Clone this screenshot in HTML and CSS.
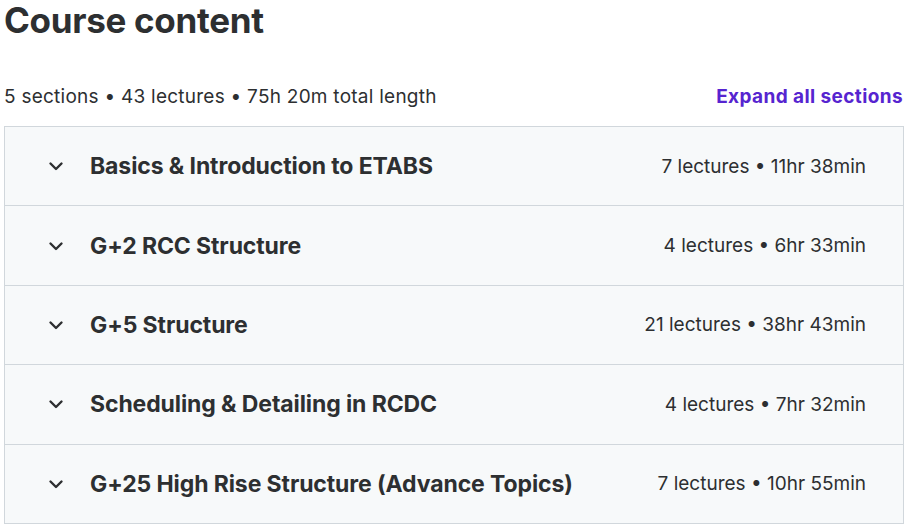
FILE: index.html
```html
<!DOCTYPE html>
<html lang="en">
<head>
    <meta charset="UTF-8">
    <meta name="viewport" content="width=device-width, initial-scale=1.0">
    <title>Course content</title>
    <link rel="stylesheet" href="styles.css">
</head>
<body>

    <div class="course-content">
        <h2>Course content</h2>

        <div class="summary">
            <span>5 sections • 43 lectures • 75h 20m total length</span>
            <button class="expand-all">Expand all sections</button>
        </div>

        <div class="sections">
            <div class="section">
                <svg class="chevron" viewBox="0 0 16 16"><path d="M2.5 5.5L8 11l5.5-5.5" /></svg>
                <span class="section-title">Basics &amp; Introduction to ETABS</span>
                <span class="section-meta">7 lectures • 11hr 38min</span>
            </div>
            <div class="section">
                <svg class="chevron" viewBox="0 0 16 16"><path d="M2.5 5.5L8 11l5.5-5.5" /></svg>
                <span class="section-title">G+2 RCC Structure</span>
                <span class="section-meta">4 lectures • 6hr 33min</span>
            </div>
            <div class="section">
                <svg class="chevron" viewBox="0 0 16 16"><path d="M2.5 5.5L8 11l5.5-5.5" /></svg>
                <span class="section-title">G+5 Structure</span>
                <span class="section-meta">21 lectures • 38hr 43min</span>
            </div>
            <div class="section">
                <svg class="chevron" viewBox="0 0 16 16"><path d="M2.5 5.5L8 11l5.5-5.5" /></svg>
                <span class="section-title">Scheduling &amp; Detailing in RCDC</span>
                <span class="section-meta">4 lectures • 7hr 32min</span>
            </div>
            <div class="section">
                <svg class="chevron" viewBox="0 0 16 16"><path d="M2.5 5.5L8 11l5.5-5.5" /></svg>
                <span class="section-title">G+25 High Rise Structure (Advance Topics)</span>
                <span class="section-meta">7 lectures • 10hr 55min</span>
            </div>
        </div>
    </div>

</body>
</html>
```

FILE: styles.css
```css
body {
    font-family: Inter, 'Liberation Sans', sans-serif;
    margin: 0;
    background-color: #ffffff;
    color: #2d2f31;
}
.course-content {
    padding: 0 2px 0 4px;
}
h2 {
    margin: 0;
    font-size: 35px;
    line-height: 40px;
    font-weight: 700;
    letter-spacing: -0.3px;
}
.summary {
    display: flex;
    justify-content: space-between;
    align-items: center;
    margin-top: 44px;
    height: 24px;
    font-size: 19px;
    letter-spacing: 0.25px;
}
.expand-all {
    background: none;
    border: none;
    padding: 0 1px 0 0;
    font-family: inherit;
    font-size: 19px;
    font-weight: 700;
    letter-spacing: 0.4px;
    color: #5624d0;
    cursor: pointer;
}
.sections {
    margin-top: 18px;
    border: 1px solid #d1d7dc;
}
.section {
    display: flex;
    align-items: center;
    height: 78.4px;
    padding: 0 37px 0 43px;
    background-color: #f7f9fa;
    border-bottom: 1px solid #d1d7dc;
}
.section:last-child {
    border-bottom: none;
}
.chevron {
    width: 16px;
    height: 16px;
    flex-shrink: 0;
    fill: none;
    stroke: #2d2f31;
    stroke-width: 2.4;
    stroke-linecap: round;
    stroke-linejoin: round;
    margin-right: 26px;
}
.section-title {
    flex: 1;
    font-size: 23px;
    font-weight: 700;
    letter-spacing: -0.1px;
}
.section-meta {
    font-size: 19px;
}
```
